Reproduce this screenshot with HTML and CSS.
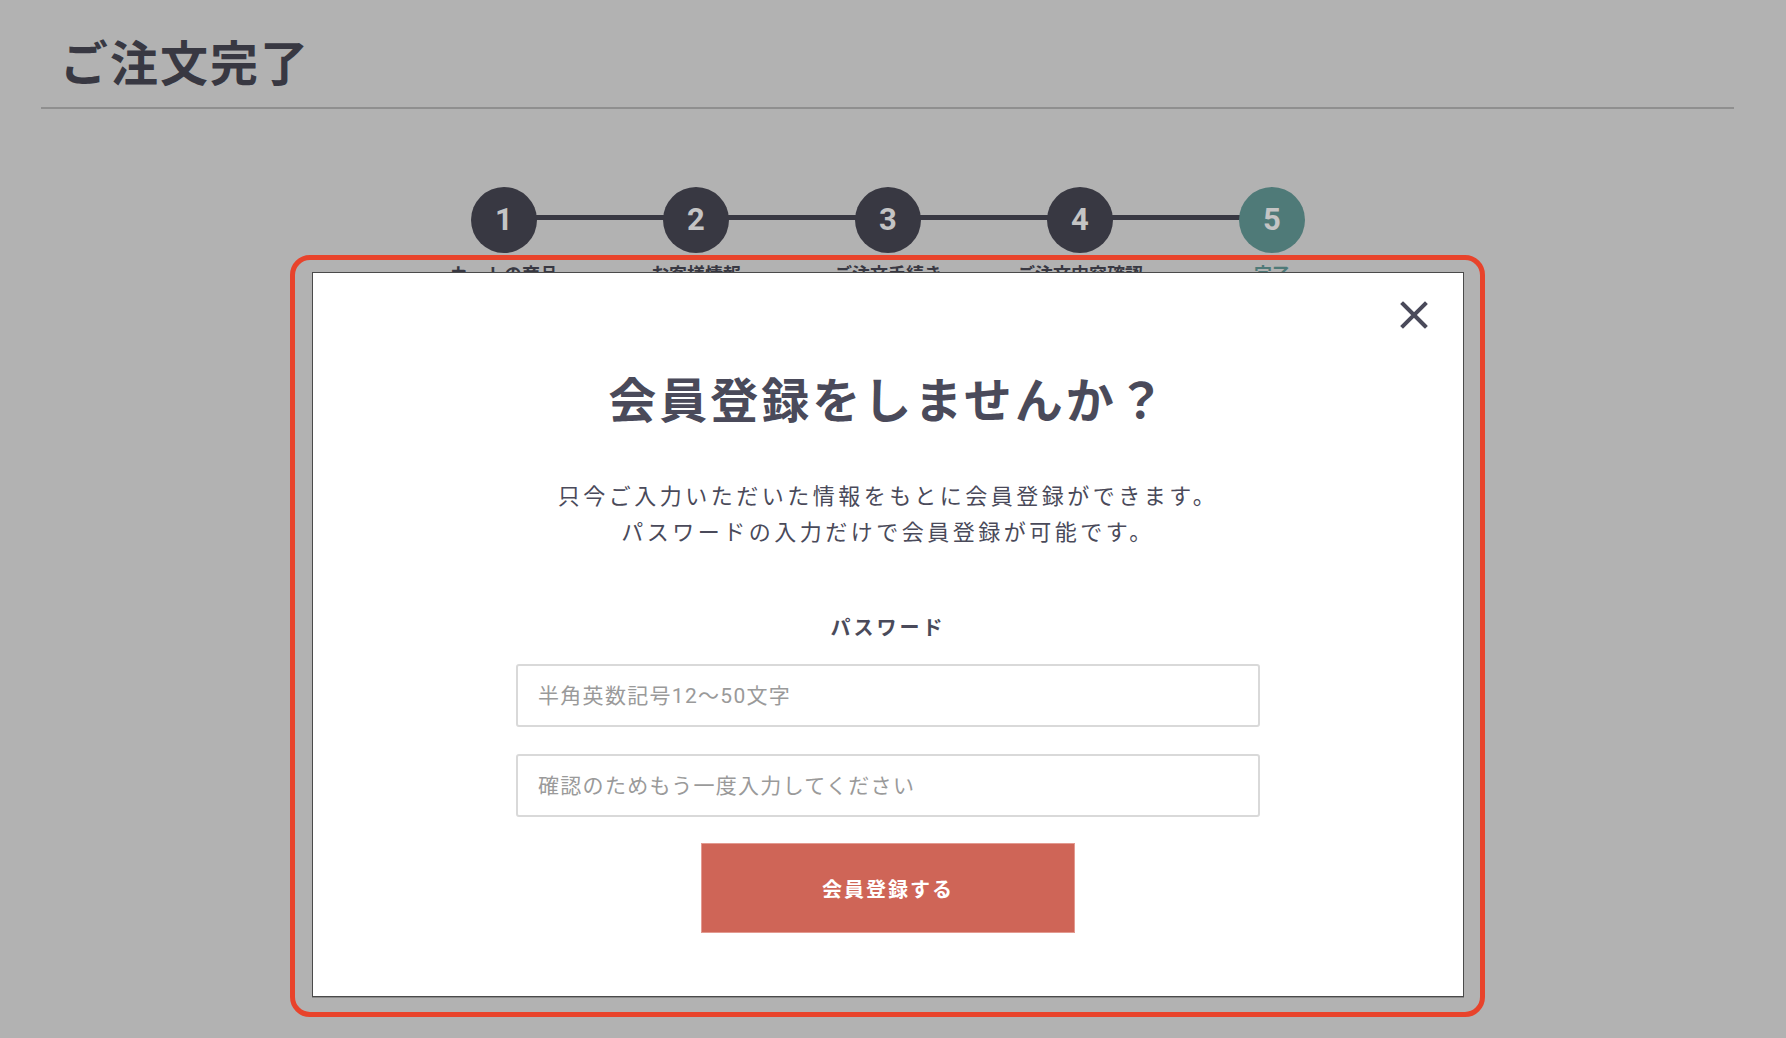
FILE: index.html
```html
<!DOCTYPE html>
<html lang="ja">
<head>
<meta charset="utf-8">
<title>ご注文完了</title>
<link rel="stylesheet" href="styles.css">
</head>
<body>
<div class="page">
  <header class="page-header">
    <h1 class="page-title">ご注文完了</h1>
  </header>
  <ol class="steps">
    <li class="step"><span class="step-num">1</span><span class="step-label">カートの商品</span></li>
    <li class="step"><span class="step-num">2</span><span class="step-label">お客様情報</span></li>
    <li class="step"><span class="step-num">3</span><span class="step-label">ご注文手続き</span></li>
    <li class="step"><span class="step-num">4</span><span class="step-label">ご注文内容確認</span></li>
    <li class="step step-current"><span class="step-num">5</span><span class="step-label">完了</span></li>
  </ol>
</div>

<div class="highlight"></div>

<div class="modal" role="dialog">
  <button class="modal-close" type="button" aria-label="閉じる">
    <svg width="28" height="28" viewBox="0 0 28 28"><path d="M3 3 L25 25 M25 3 L3 25" stroke="#4a4a5a" stroke-width="4" stroke-linecap="square" fill="none"/></svg>
  </button>
  <h2 class="modal-title">会員登録をしませんか？</h2>
  <p class="modal-desc">只今ご入力いただいた情報をもとに会員登録ができます。<br>パスワードの入力だけで会員登録が可能です。</p>
  <form class="modal-form">
    <label class="field-label" for="pw">パスワード</label>
    <input class="field-input" id="pw" type="password" placeholder="半角英数記号12〜50文字">
    <input class="field-input" type="password" placeholder="確認のためもう一度入力してください">
    <button class="submit-btn" type="button">会員登録する</button>
  </form>
</div>
</body>
</html>
```

FILE: styles.css
```css
* { box-sizing: border-box; }

html, body {
  margin: 0;
  padding: 0;
}

body {
  background: #b2b2b2;
  font-family: "Noto Sans CJK JP", "Noto Sans", sans-serif;
  color: #383842;
  min-height: 1038px;
  position: relative;
}

.page {
  margin: 0 52px 0 41px;
}

.page-header {
  padding: 24px 0 11px 19px;
  border-bottom: 2px solid #8f8f8f;
}

.page-title {
  margin: 0;
  font-size: 48px;
  line-height: 72px;
  font-weight: 700;
  color: #383842;
  letter-spacing: 2px;
}

.steps {
  list-style: none;
  margin: 78px auto 0;
  padding: 0 0 0 1px;
  display: flex;
  justify-content: center;
}

.step {
  width: 192px;
  display: flex;
  flex-direction: column;
  align-items: center;
  position: relative;
}

.step::after {
  content: "";
  position: absolute;
  left: 50%;
  top: 28px;
  width: 100%;
  height: 5px;
  background: #383842;
  z-index: 0;
}

.step:last-child::after { display: none; }

.step-num {
  position: relative;
  z-index: 1;
  width: 66px;
  height: 66px;
  border-radius: 50%;
  background: #383842;
  color: #c4c4c4;
  font-family: Roboto, "Liberation Sans", sans-serif;
  font-weight: 700;
  font-size: 31px;
  line-height: 66px;
  text-align: center;
}

.step-current .step-num { background: #4f7a78; }

.step-label {
  margin-top: 7px;
  font-size: 18px;
  line-height: 26px;
  font-weight: 700;
  white-space: nowrap;
  color: #383842;
}

.step-current .step-label { color: #4f7a78; }

.highlight {
  position: absolute;
  left: 290px;
  top: 255px;
  width: 1195px;
  height: 762px;
  border: 5px solid #e8432b;
  border-radius: 20px;
  pointer-events: none;
}

.modal {
  position: absolute;
  left: 312px;
  top: 272px;
  width: 1152px;
  height: 725px;
  background: #fff;
  border: 1px solid #4a4a4a;
  box-shadow: 0 1px 0 #8a8a8a;
  display: flex;
  flex-direction: column;
  align-items: center;
  padding-top: 88px;
  color: #4a4a5a;
}

.modal-close {
  position: absolute;
  top: 28px;
  right: 35px;
  width: 28px;
  height: 28px;
  padding: 0;
  border: 0;
  background: none;
  cursor: pointer;
}

.modal-close svg { display: block; }

.modal-title {
  margin: 0;
  font-size: 48px;
  line-height: 72px;
  font-weight: 700;
  letter-spacing: 3px;
  color: #4a4a5a;
}

.modal-desc {
  margin: 43px 0 0;
  font-size: 22px;
  line-height: 36px;
  letter-spacing: 3.5px;
  text-align: center;
  color: #4a4a5a;
}

.modal-form {
  margin-top: 64px;
  display: flex;
  flex-direction: column;
  align-items: center;
  width: 744px;
}

.field-label {
  font-size: 20px;
  line-height: 30px;
  font-weight: 700;
  letter-spacing: 3px;
  color: #4a4a5a;
  margin-bottom: 22px;
}

.field-input {
  width: 744px;
  height: 63px;
  border: 2px solid #d9d9d9;
  border-radius: 3px;
  padding: 0 20px;
  font-family: Roboto, "Noto Sans CJK JP", sans-serif;
  font-size: 21px;
  letter-spacing: 1.3px;
  color: #4a4a5a;
  background: #fff;
  outline: none;
}

.field-input + .field-input { margin-top: 27px; }

.field-input::placeholder { color: #9a9a9a; }

.submit-btn {
  margin-top: 26px;
  width: 374px;
  height: 90px;
  background: #cf6557;
  border: 1px solid #e39a90;
  color: #fff;
  font-family: "Noto Sans CJK JP", sans-serif;
  font-size: 20px;
  font-weight: 700;
  letter-spacing: 2px;
  cursor: pointer;
}
```
